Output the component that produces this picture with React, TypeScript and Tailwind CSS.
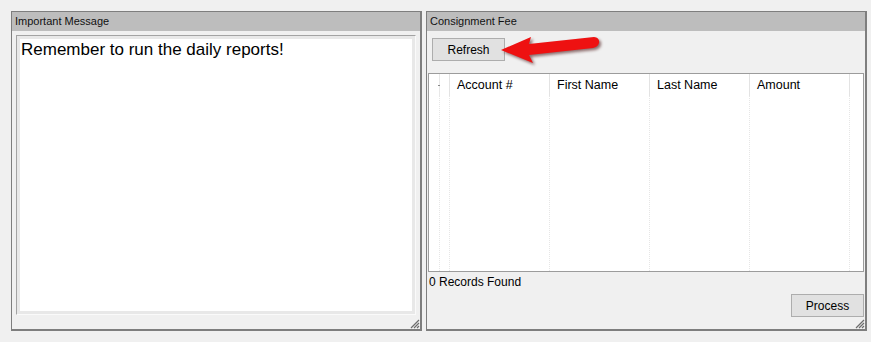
import React from 'react';

const ui = { fontFamily: '"Liberation Sans", Arial, sans-serif' };

const Grip = () => (
  <svg className="absolute right-0 bottom-0" width="10" height="10" viewBox="0 0 10 10">
    <path d="M9 1 L1 9 M9 4 L4 9 M9 7 L7 9" stroke="#6d6d6d" strokeWidth="1.2" />
  </svg>
);

const PanelHeader = ({ title }: { title: string }) => (
  <div className="h-[19px] bg-[#bdbdbd] flex items-center pl-[3px] text-[11px] text-[#111]">{title}</div>
);

const columns = ['Account #', 'First Name', 'Last Name', 'Amount'];

export default function App() {
  return (
    <div className="w-[871px] h-[342px] bg-[#f0f0f0] flex gap-[4px] pt-[11px] pl-[11px] relative" style={ui}>
      {/* Important Message */}
      <div className="relative w-[411px] h-[320px] border border-[#7e7e7e] border-r-2 border-b-2 flex flex-col">
        <PanelHeader title="Important Message" />
        <div className="mt-[4px] ml-[4px] mr-[4px] h-[280px] border border-t-[#a3a3a3] border-l-[#a3a3a3] border-r-[#fafafa] border-b-[#fafafa]">
          <div className="h-full border-[3px] border-[#e8e8e8] bg-white px-[1px] text-[17px] leading-[21px] text-black">
            Remember to run the daily reports!
          </div>
        </div>
        <Grip />
      </div>

      {/* Consignment Fee */}
      <div className="relative w-[441px] h-[320px] border border-[#7e7e7e] border-r-2 border-b-2 flex flex-col">
        <PanelHeader title="Consignment Fee" />
        <div className="flex pl-[5px] pt-[7px]">
          <button className="w-[73px] h-[23px] bg-[#e1e1e1] border border-[#adadad] text-[12px] text-black">Refresh</button>
        </div>
        <div className="mt-[12px] mx-[1px] h-[199px] bg-white border border-[#9c9c9c] flex text-[12.5px] text-black">
          <div className="w-[11px] flex flex-col">
            <div className="h-[22px] border-r border-[#e8e8e8] relative">
              <span className="absolute right-[-1px] top-[11px] w-[2px] h-[1px] bg-[#888]" />
            </div>
            <div className="flex-1 border-r border-dotted border-[#e6e6e6]" />
          </div>
          <div className="w-[10px] flex flex-col">
            <div className="h-[22px] border-r border-[#e3e3e3]" />
            <div className="flex-1 border-r border-dotted border-[#e6e6e6]" />
          </div>
          {columns.map(c => (
            <div key={c} className="w-[100px] flex flex-col">
              <div className="h-[22px] border-r border-[#e3e3e3] flex items-center pl-[7px]">{c}</div>
              <div className="flex-1 border-r border-dotted border-[#e6e6e6]" />
            </div>
          ))}
        </div>
        <div className="pl-[2px] pt-[3px] text-[12px] leading-[15px] text-black">0 Records Found</div>
        <div className="flex justify-end pr-[1px] pt-[4px]">
          <button className="w-[73px] h-[23px] bg-[#e1e1e1] border border-[#adadad] text-[12px] text-black">Process</button>
        </div>
        <Grip />
      </div>

      {/* red arrow */}
      <svg className="absolute left-0 top-0 pointer-events-none" width="871" height="342">
        <defs>
          <filter id="sh" x="-20%" y="-50%" width="140%" height="200%">
            <feGaussianBlur stdDeviation="1.5" />
          </filter>
        </defs>
        <path
          d="M501 50 L531 37 L529 44 L594 37 Q600 38 599 43 Q598 47 593 48 L529 55 L533 63 Z"
          fill="#3a0000"
          opacity="0.55"
          transform="translate(2 2)"
          filter="url(#sh)"
        />
        <path
          d="M501 50 L531 37 L529 44 L594 37 Q600 38 599 43 Q598 47 593 48 L529 55 L533 63 Z"
          fill="#ee1111"
        />
      </svg>
    </div>
  );
}
